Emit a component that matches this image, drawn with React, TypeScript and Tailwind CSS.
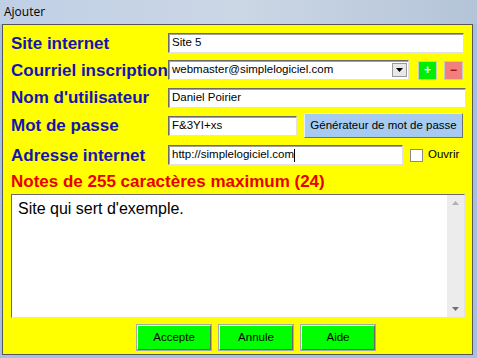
import React from "react";

const label = "font-['Liberation_Sans',Arial,sans-serif] font-bold text-[17px] text-[#1414b4] leading-none";
const inputCls =
  "h-[20px] bg-white border border-t-[#6b6b6b] border-l-[#6b6b6b] border-b-[#e2e2e2] border-r-[#e2e2e2] shadow-[inset_1px_1px_0_#a0a0a0] px-[3px] flex items-center font-['Liberation_Sans',Arial,sans-serif] text-[11.5px] text-black whitespace-nowrap overflow-hidden";
const greenBtn =
  "w-[74px] h-[25px] bg-[#00ff00] border border-t-[#f0f0f0] border-l-[#f0f0f0] border-b-[#6a6a6a] border-r-[#6a6a6a] shadow-[0_0_0_1px_#a8a8a8] flex items-center justify-center font-['Liberation_Sans',Arial,sans-serif] text-[11.5px] text-black";

export default function App() {
  return (
    <div className="w-[477px] h-[358px] bg-[#a9bfdf] flex flex-col overflow-hidden">
      {/* title bar */}
      <div className="h-[24px] shrink-0 bg-gradient-to-r from-[#bfcfe6] via-[#ccd7e5] to-[#b4c4d8] flex items-center pl-[4px]">
        <span className="font-['Open_Sans',sans-serif] text-[12px] text-black leading-none">Ajouter</span>
      </div>
      <div className="flex-1 mx-[2px] mb-[3px] mr-[4px] border border-[#565656] bg-[#ffff00] flex flex-col pl-[8px] pr-[6px] pt-[6px]">
        {/* Row 1 */}
        <div className="h-[24px] flex items-center">
          <div className={`w-[157px] ${label}`}>Site internet</div>
          <div className={`${inputCls} w-[296px]`}>Site 5</div>
        </div>
        {/* Row 2 */}
        <div className="h-[30px] flex items-center">
          <div className={`w-[157px] ${label}`}>Courriel inscription</div>
          <div className={`${inputCls} w-[241px] pr-[1px] justify-between`}>
            <span>webmaster@simplelogiciel.com</span>
            <div className="w-[15px] h-[14px] bg-[#e8e8e8] border border-[#9a9a9a] flex items-center justify-center">
              <svg width="7" height="4" viewBox="0 0 7 4"><path d="M0 0h7L3.5 4z" fill="#000" /></svg>
            </div>
          </div>
          <div className="ml-[9px] w-[19px] h-[19px] bg-[#00ee00] border border-[#c9c9c9] flex items-center justify-center text-white text-[12px] font-bold font-['Liberation_Sans',Arial,sans-serif] leading-none">+</div>
          <div className="ml-[7px] w-[19px] h-[19px] bg-[#f08080] border border-[#c9c9c9] flex items-center justify-center text-[#b00000] text-[12px] font-bold font-['Liberation_Sans',Arial,sans-serif] leading-none">−</div>
        </div>
        {/* Row 3 */}
        <div className="h-[25px] flex items-center">
          <div className={`w-[157px] ${label}`}>Nom d'utilisateur</div>
          <div className={`${inputCls} w-[298px]`}>Daniel Poirier</div>
        </div>
        {/* Row 4 */}
        <div className="h-[31px] flex items-center">
          <div className={`w-[157px] ${label}`}>Mot de passe</div>
          <div className={`${inputCls} w-[129px] h-[19px]`}>F&amp;3YI+xs</div>
          <div className="ml-[7px] w-[159px] h-[25px] bg-[#a6caf0] border border-t-[#e8f0fa] border-l-[#e8f0fa] border-b-[#6f6f6f] border-r-[#6f6f6f] flex items-center justify-center font-['Liberation_Sans',Arial,sans-serif] text-[11.5px] text-black">
            Générateur de mot de passe
          </div>
        </div>
        {/* Row 5 */}
        <div className="h-[28px] flex items-center">
          <div className={`w-[157px] ${label}`}>Adresse internet</div>
          <div className={`${inputCls} w-[235px]`}>
            http://simplelogiciel.com<span className="inline-block w-px h-[13px] bg-black" />
          </div>
          <div className="ml-[7px] w-[13px] h-[13px] bg-white border border-[#8a8a8a]" />
          <span className="ml-[5px] font-['Liberation_Sans',Arial,sans-serif] text-[11.5px] text-black">Ouvrir</span>
        </div>
        {/* Row 6 */}
        <div className="h-[24px] flex items-center">
          <div className="font-['Liberation_Sans',Arial,sans-serif] font-bold text-[17px] text-[#e80000] leading-none">
            Notes de 255 caractères maximum (24)
          </div>
        </div>
        {/* textarea */}
        <div className="mt-[1px] w-[454px] h-[124px] bg-white border border-t-[#6b6b6b] border-l-[#6b6b6b] border-b-[#e2e2e2] border-r-[#e2e2e2] flex">
          <div className="flex-1 pl-[6px] pt-[4px] font-['Liberation_Sans',Arial,sans-serif] text-[16px] text-black leading-tight">
            Site qui sert d'exemple.
          </div>
          <div className="w-[17px] bg-[#ececec] flex flex-col justify-between items-center py-[6px]">
            <svg width="7" height="4" viewBox="0 0 7 4"><path d="M0 4h7L3.5 0z" fill="#b0b0b0" /></svg>
            <svg width="7" height="4" viewBox="0 0 7 4"><path d="M0 0h7L3.5 4z" fill="#707070" /></svg>
          </div>
        </div>
        {/* buttons */}
        <div className="mt-[7px] flex gap-[8px] pl-[126px]">
          <div className={greenBtn}>Accepte</div>
          <div className={greenBtn}>Annule</div>
          <div className={greenBtn}>Aide</div>
        </div>
      </div>
    </div>
  );
}
